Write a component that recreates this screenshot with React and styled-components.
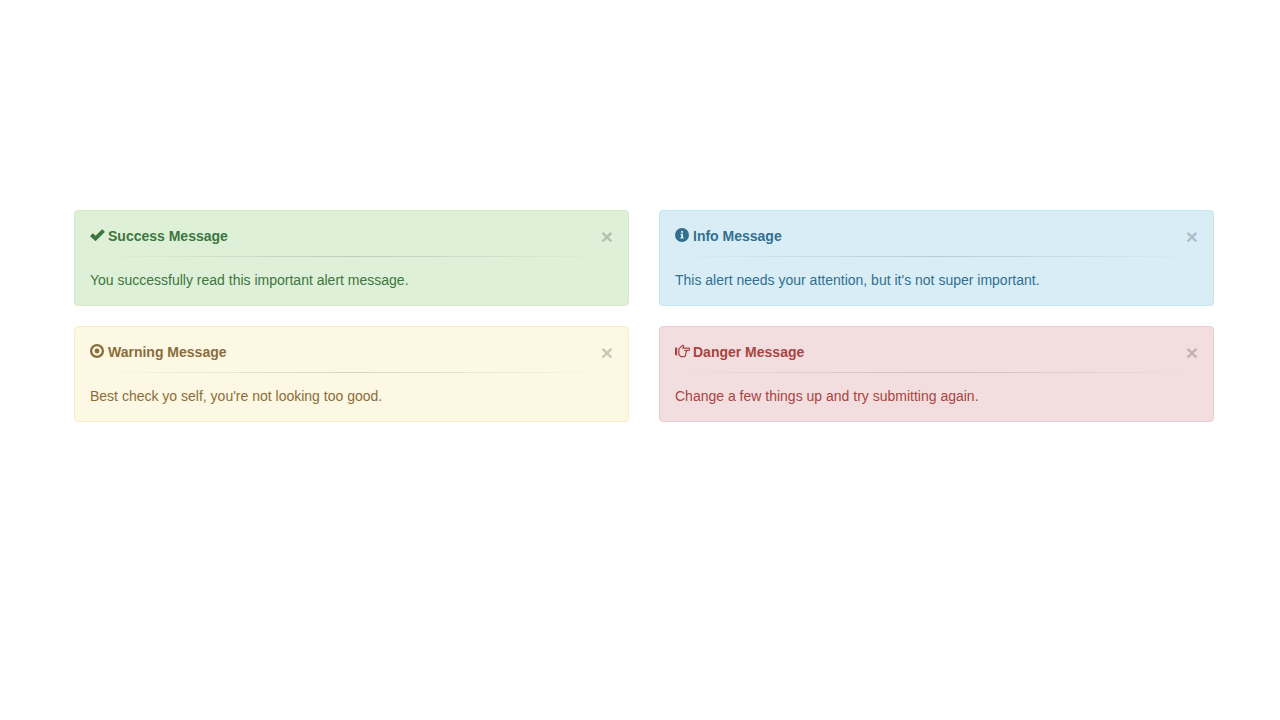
import { useState } from "react";
import styled, { createGlobalStyle } from "styled-components";

const GlobalStyle = createGlobalStyle`
  * {
    box-sizing: border-box;
  }

  body {
    margin: 0;
    background-color: #fff;
    font-family: "Liberation Sans", Arial, sans-serif;
    font-size: 14px;
    line-height: 20px;
  }
`

const themes = {
  success: { color: '#3c763d', background: '#dff0d8', border: '#d6e9c6' },
  info: { color: '#31708f', background: '#d9edf7', border: '#bce8f1' },
  warning: { color: '#8a6d3b', background: '#fcf8e3', border: '#faebcc' },
  danger: { color: '#a94442', background: '#f2dede', border: '#ebccd1' },
}

const Page = styled.main`
  padding: 210px 15px 20px 23px;
`

const AlertsGrid = styled.div`
  display: grid;
  grid-template-columns: 1fr 1fr;
  align-items: start;
  gap: 20px 30px;
  max-width: 1140px;
  margin: 0 auto;

  @media (max-width: 767px) {
    grid-template-columns: 1fr;
  }
`

const AlertBox = styled.div`
  padding: 15px;
  border: 1px solid ${props => themes[props.$type].border};
  border-radius: 4px;
  color: ${props => themes[props.$type].color};
  background-color: ${props => themes[props.$type].background};
`

const AlertHeader = styled.div`
  display: flex;
  justify-content: space-between;
  height: 20px;
`

const AlertTitle = styled.strong`
  display: flex;
  align-items: flex-start;
  gap: 4px;
`

const Icon = styled.svg`
  width: 14px;
  height: 14px;
  margin-top: 2px;
  overflow: visible;
  fill: currentColor;
`

const CloseButton = styled.button`
  padding: 0;
  border: 0;
  background: transparent;
  color: #000;
  font-family: inherit;
  font-size: 21px;
  font-weight: 700;
  line-height: 21px;
  text-shadow: 0 1px 0 #fff;
  opacity: 0.2;
  cursor: pointer;

  &:hover {
    opacity: 0.5;
  }
`

const Divider = styled.hr`
  height: 1px;
  margin: 10px 0 13px;
  border: 0;
  background-image: linear-gradient(to right, rgba(0, 0, 0, 0), rgba(0, 0, 0, 0.15), rgba(0, 0, 0, 0));
`

const AlertText = styled.p`
  margin: 0;
`

const icons = {
  success: (
    <path d="M12.5 1.5 14.6 3.6Q14.9 3.9 14.6 4.2L6 12.8Q5.5 13.3 5 12.8L0.4 8.4Q0.1 8.1 0.4 7.8L2.5 5.6Q2.8 5.3 3.2 5.6L5.6 7.7 11.9 1.5Q12.2 1.2 12.5 1.5Z" />
  ),
  info: (
    <path
      fillRule="evenodd"
      d="M7 0A7 7 0 1 1 7 14A7 7 0 1 1 7 0ZM6.1 3V4.7H8V3ZM5.2 5.7V6.6H6.1V9.6H5.2V10.5H8.9V9.6H8V5.7Z"
    />
  ),
  warning: (
    <>
      <circle cx="7" cy="7" r="5.9" fill="none" stroke="currentColor" strokeWidth="2.3" />
      <circle cx="7" cy="7" r="2.4" />
    </>
  ),
  danger: (
    <>
      <path d="M0 3.6H2.2V11.2H0Z" />
      <path
        d="M3.9 4.9 7 1.9Q8 0.9 8.6 1.8Q8.9 2.4 8.2 3.5L7.8 4.2H13.7Q14.7 4.3 14.7 5.3Q14.6 6.4 13.5 6.4H11.3Q11.8 7.2 11 8Q11.4 9 10.6 9.7Q10.8 12.6 9 12.6H5.8L3.9 10.8Z"
        fill="none"
        stroke="currentColor"
        strokeWidth="1.2"
        strokeLinejoin="round"
      />
      <path d="M9 6.4H11.3" fill="none" stroke="currentColor" strokeWidth="1" />
    </>
  ),
}

const alerts = [
  { type: 'success', title: 'Success Message', text: 'You successfully read this important alert message.' },
  { type: 'info', title: 'Info Message', text: "This alert needs your attention, but it's not super important." },
  { type: 'warning', title: 'Warning Message', text: "Best check yo self, you're not looking too good." },
  { type: 'danger', title: 'Danger Message', text: 'Change a few things up and try submitting again.' },
]

const Alert = (props) => {

  const { type, title, text, onClose } = props;

  return (
    <AlertBox $type={type} role="alert">
      <AlertHeader>
        <AlertTitle>
          <Icon viewBox="0 0 14 14" aria-hidden="true">{icons[type]}</Icon>
          {title}
        </AlertTitle>
        <CloseButton type="button" aria-label="Close" onClick={onClose}>×</CloseButton>
      </AlertHeader>
      <Divider />
      <AlertText>{text}</AlertText>
    </AlertBox>
  )
}

const App = () => {

  const [closed, setClosed] = useState([]);

  return (
    <Page>
      <GlobalStyle />
      <AlertsGrid>
        {alerts.filter(alert => !closed.includes(alert.type)).map(alert => (
          <Alert key={alert.type} {...alert} onClose={() => setClosed([...closed, alert.type])} />
        ))}
      </AlertsGrid>
    </Page>
  )
}

export default App
